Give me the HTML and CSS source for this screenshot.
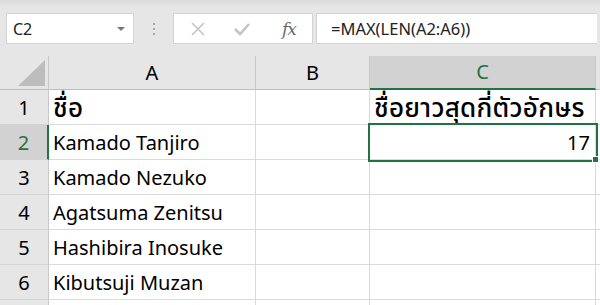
FILE: index.html
```html
<!DOCTYPE html>
<html lang="th">
<head>
  <meta charset="UTF-8" />
  <meta name="viewport" content="width=device-width, initial-scale=1.0"/>
  <title>MAX LEN</title>
  <link rel="stylesheet" href="styles.css">
</head>
<body>
  <div class="toolbar">
    <div class="namebox">
      <span>C2</span>
      <span class="caret"></span>
    </div>
    <div class="grip"><i></i><i></i><i></i></div>
    <div class="fxbox">
      <svg class="icon" width="16" height="14" viewBox="0 0 16 14">
        <path d="M2 1 L14 13 M14 1 L2 13" stroke="#c4c4c4" stroke-width="1.6" fill="none"/>
      </svg>
      <svg class="icon" width="16" height="14" viewBox="0 0 16 14">
        <path d="M1 7 L6 12 L15 2" stroke="#c4c4c4" stroke-width="2.6" fill="none"/>
      </svg>
      <span class="fx">fx</span>
    </div>
    <div class="formula">=MAX(LEN(A2:A6))</div>
  </div>

  <div class="sheet">
    <div class="corner"><span class="tri"></span></div>
    <div class="colhead">A</div>
    <div class="colhead">B</div>
    <div class="colhead active">C</div>
    <div class="colhead rest"></div>

    <div class="rowhead">1</div>
    <div class="cell th">ชื่อ</div>
    <div class="cell"></div>
    <div class="cell th">ชื่อยาวสุดกี่ตัวอักษร</div>
    <div class="cell rest"></div>

    <div class="rowhead active">2</div>
    <div class="cell">Kamado Tanjiro</div>
    <div class="cell"></div>
    <div class="cell num selected">17<span class="handle"></span></div>
    <div class="cell rest"></div>

    <div class="rowhead">3</div>
    <div class="cell">Kamado Nezuko</div>
    <div class="cell"></div>
    <div class="cell"></div>
    <div class="cell rest"></div>

    <div class="rowhead">4</div>
    <div class="cell">Agatsuma Zenitsu</div>
    <div class="cell"></div>
    <div class="cell"></div>
    <div class="cell rest"></div>

    <div class="rowhead">5</div>
    <div class="cell">Hashibira Inosuke</div>
    <div class="cell"></div>
    <div class="cell"></div>
    <div class="cell rest"></div>

    <div class="rowhead">6</div>
    <div class="cell">Kibutsuji Muzan</div>
    <div class="cell"></div>
    <div class="cell"></div>
    <div class="cell rest"></div>

    <div class="rowhead"></div>
    <div class="cell"></div>
    <div class="cell"></div>
    <div class="cell"></div>
    <div class="cell rest"></div>
  </div>
</body>
</html>
```

FILE: styles.css
```css
body {
  margin: 0;
  width: 600px;
  height: 305px;
  overflow: hidden;
  background: #e6e6e6;
  font-family: 'Noto Sans', 'Noto Sans Thai', sans-serif;
  color: #000;
}

.toolbar {
  height: 56px;
  display: flex;
  align-items: flex-start;
  padding: 13px 0 0 6px;
  box-sizing: border-box;
  background: linear-gradient(#d9d9d9, #e6e6e6 6px);
}

.namebox {
  width: 128px;
  height: 31px;
  box-sizing: border-box;
  background: #fff;
  border: 1px solid #d4d4d4;
  display: flex;
  align-items: center;
  justify-content: space-between;
  padding: 0 8px 0 6px;
  font-size: 16px;
  color: #222;
}

.caret {
  width: 0;
  height: 0;
  border-left: 4px solid transparent;
  border-right: 4px solid transparent;
  border-top: 4px solid #777;
}

.grip {
  width: 39px;
  height: 31px;
  display: flex;
  flex-direction: column;
  align-items: center;
  justify-content: center;
  gap: 3px;
}

.grip i {
  width: 2px;
  height: 2px;
  background: #a8a8a8;
}

.fxbox {
  width: 140px;
  height: 31px;
  box-sizing: border-box;
  background: #fff;
  border: 1px solid #d4d4d4;
  display: flex;
  align-items: center;
  padding: 0 14px 0 16px;
  gap: 28px;
}

.fx {
  font-family: 'DejaVu Serif', 'Liberation Serif', serif;
  font-style: italic;
  font-size: 17px;
  color: #6a6a6a;
  margin-left: 4px;
  letter-spacing: -1px;
}

.formula {
  flex: 1;
  margin-left: 3px;
  margin-right: 3px;
  height: 31px;
  box-sizing: border-box;
  background: #fff;
  border: 1px solid #d4d4d4;
  border-right: none;
  padding: 3px 0 0 14px;
  font-size: 16.5px;
  color: #222;
}

.sheet {
  display: grid;
  grid-template-columns: 49px 207px 114px 226px 1fr;
  grid-template-rows: 34px repeat(7, 35px);
}

.corner {
  border-right: 1px solid #c8c8c8;
  border-bottom: 1px solid #bcbcbc;
  position: relative;
}

.tri {
  position: absolute;
  right: 3px;
  bottom: 3px;
  width: 0;
  height: 0;
  border-left: 27px solid transparent;
  border-bottom: 26px solid #bdbdbd;
}

.colhead {
  background: #e6e6e6;
  border-right: 1px solid #c8c8c8;
  border-bottom: 1px solid #bcbcbc;
  display: flex;
  align-items: flex-end;
  justify-content: center;
  padding-bottom: 3px;
  box-sizing: border-box;
  font-size: 20px;
}

.colhead.active {
  background: #d2d2d2;
  color: #217346;
  border-bottom: 2px solid #217346;
}

.colhead.rest {
  border-right: none;
}

.rowhead {
  background: #e6e6e6;
  border-right: 1px solid #c8c8c8;
  border-bottom: 1px solid #d4d4d4;
  display: flex;
  align-items: flex-end;
  justify-content: center;
  padding-bottom: 3px;
  box-sizing: border-box;
  font-size: 20px;
}

.rowhead.active {
  background: #d2d2d2;
  color: #217346;
  border-right: 2px solid #217346;
}

.cell {
  background: #fff;
  border-right: 1px solid #dadada;
  border-bottom: 1px solid #dadada;
  display: flex;
  align-items: flex-end;
  padding: 0 4px 3px;
  box-sizing: border-box;
  font-size: 20px;
  white-space: nowrap;
  position: relative;
}

.cell.th {
  font-size: 26px;
  font-weight: 500;
  letter-spacing: 0.3px;
  line-height: 1.2;
  padding-bottom: 1px;
}

.cell.rest {
  border-right: none;
}

.cell.num {
  justify-content: flex-end;
  padding-right: 5px;
}

.cell.selected {
  outline: 2px solid #217346;
  outline-offset: 0;
  z-index: 1;
}

.handle {
  position: absolute;
  right: -4px;
  bottom: -4px;
  width: 5px;
  height: 5px;
  background: #217346;
  border: 1px solid #fff;
}
```
